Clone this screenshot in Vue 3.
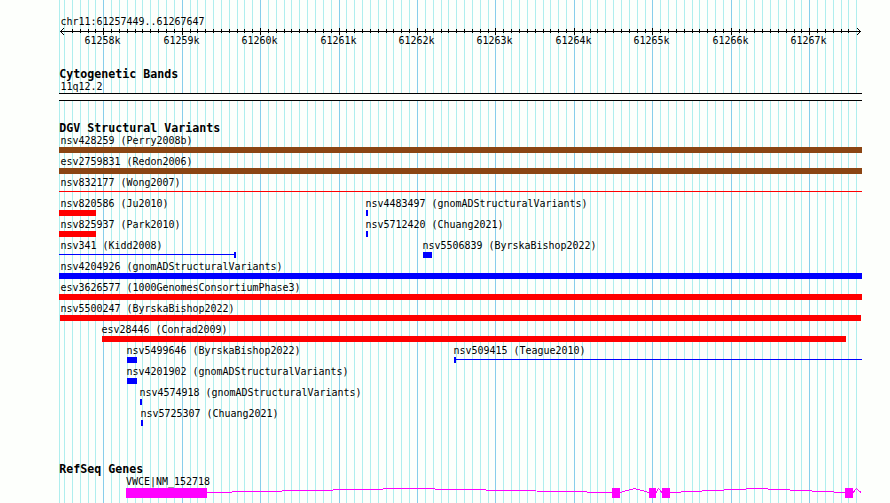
<script setup>
const START = 61257449
const END = 61267647
const LEFT = 60
const px = (bp) => Math.round(LEFT + ((bp - START) * 800) / (END - START))

const ticks = []
for (let bp = Math.ceil(START / 100) * 100; bp <= END; bp += 100) {
  ticks.push({ x: px(bp), major: bp % 1000 === 0, label: `${bp / 1000}k` })
}
const majors = ticks.filter((t) => t.major)
// The outermost grid lines sit under the arrowheads and get no tick
const axisTicks = ticks.slice(1, -1)

const titles = [
  { text: 'Cytogenetic Bands', y: 78 },
  { text: 'DGV Structural Variants', y: 132 },
  { text: 'RefSeq Genes', y: 473 },
]

const labels = [
  { text: 'chr11:61257449..61267647', x: 60, y: 25 },
  { text: '11q12.2', x: 60, y: 90 },
  { text: 'VWCE|NM_152718', x: 125.5, y: 485 },
]

// Features: label position, then bar extent
const variants = [
  { text: 'nsv428259 (Perry2008b)', x: 60, y: 144, from: 59, to: 862, color: '#8b4513' },
  { text: 'esv2759831 (Redon2006)', x: 60, y: 165, from: 59, to: 862, color: '#8b4513' },
  { text: 'nsv832177 (Wong2007)', x: 60, y: 186, from: 59, to: 862, color: '#ff0000', thin: true },
  { text: 'nsv820586 (Ju2010)', x: 60, y: 207, from: 59, to: 96, color: '#ff0000' },
  { text: 'nsv4483497 (gnomADStructuralVariants)', x: 365, y: 207, from: 366, to: 368, color: '#0000ff' },
  { text: 'nsv825937 (Park2010)', x: 60, y: 228, from: 59, to: 96, color: '#ff0000' },
  { text: 'nsv5712420 (Chuang2021)', x: 365, y: 228, from: 366, to: 368, color: '#0000ff' },
  { text: 'nsv341 (Kidd2008)', x: 60, y: 249, from: 59, to: 235, color: '#0000ff', thin: true, cap: 234 },
  { text: 'nsv5506839 (ByrskaBishop2022)', x: 422, y: 249, from: 423, to: 432, color: '#0000ff' },
  { text: 'nsv4204926 (gnomADStructuralVariants)', x: 60, y: 270, from: 59, to: 862, color: '#0000ff' },
  { text: 'esv3626577 (1000GenomesConsortiumPhase3)', x: 60, y: 291, from: 59, to: 862, color: '#ff0000' },
  { text: 'nsv5500247 (ByrskaBishop2022)', x: 60, y: 312, from: 60, to: 861, color: '#ff0000' },
  { text: 'esv28446 (Conrad2009)', x: 101, y: 333, from: 102, to: 846, color: '#ff0000' },
  { text: 'nsv5499646 (ByrskaBishop2022)', x: 126, y: 354, from: 127, to: 137, color: '#0000ff' },
  { text: 'nsv509415 (Teague2010)', x: 453, y: 354, from: 454, to: 862, color: '#0000ff', thin: true, cap: 454 },
  { text: 'nsv4201902 (gnomADStructuralVariants)', x: 126, y: 375, from: 127, to: 137, color: '#0000ff' },
  { text: 'nsv4574918 (gnomADStructuralVariants)', x: 139, y: 396, from: 140, to: 142, color: '#0000ff' },
  { text: 'nsv5725307 (Chuang2021)', x: 140, y: 417, from: 141, to: 143, color: '#0000ff' },
]

const exons = [
  { x: 126, w: 81 },
  { x: 612, w: 8 },
  { x: 649, w: 7 },
  { x: 662, w: 8 },
  { x: 845, w: 8 },
]
const introns =
  'M207 492.5L409.5 488.5L612 492.5M620 492.5L634.5 488.5L649 492.5M656 492.5L658.5 488.5L662 492.5M670 492.5L757 488.5L845 492.5M853 492.5L856.5 488.5L861 492.5'
</script>

<template>
  <svg class="browser" width="890" height="503" viewBox="0 0 890 503">
    <g class="grid">
      <rect x="59" y="0" width="1" height="503" />
      <rect
        v-for="t in ticks"
        :key="t.x"
        :class="{ major: t.major }"
        :x="t.x"
        y="0"
        width="1"
        height="503"
      />
    </g>

    <g class="axis">
      <rect x="60" y="31" width="801" height="1" />
      <rect v-for="t in axisTicks" :key="t.x" :x="t.x" :y="t.major ? 28 : 29" width="1" :height="t.major ? 7 : 4" />
      <path d="M64 28L60.5 31.5L64 35M857 28L860.5 31.5L857 35" />
    </g>
    <text
      v-for="t in majors"
      :key="t.label"
      class="label"
      :x="t.x - 18.5"
      y="44"
      textLength="36"
      lengthAdjust="spacingAndGlyphs"
    >{{ t.label }}</text>

    <text
      v-for="t in titles"
      :key="t.text"
      class="title"
      x="59.3"
      :y="t.y"
      :textLength="t.text.length * 7"
      lengthAdjust="spacingAndGlyphs"
    >{{ t.text }}</text>
    <text
      v-for="l in labels"
      :key="l.text"
      class="label"
      :x="l.x + 0.4"
      :y="l.y"
      :textLength="l.text.length * 6"
      lengthAdjust="spacingAndGlyphs"
    >{{ l.text }}</text>

    <rect class="band-fill" x="59" y="94" width="803" height="6" />
    <rect x="59" y="93" width="803" height="1" />
    <rect x="59" y="100" width="803" height="1" />

    <g v-for="v in variants" :key="v.text">
      <text
        class="label"
        :x="v.x + 0.4"
        :y="v.y"
        :textLength="v.text.length * 6"
        lengthAdjust="spacingAndGlyphs"
      >{{ v.text }}</text>
      <rect
        :x="v.from"
        :y="v.thin ? v.y + 5 : v.y + 3"
        :width="v.to - v.from"
        :height="v.thin ? 1 : 6"
        :fill="v.color"
      />
      <rect v-if="v.cap" :x="v.cap" :y="v.y + 3" width="2" height="6" :fill="v.color" />
    </g>

    <path class="intron" :d="introns" />
    <rect v-for="e in exons" :key="e.x" class="exon" :x="e.x" y="488" :width="e.w" height="10" />
  </svg>
</template>

<style>
body {
  background: #fdfffc;
}
</style>

<style scoped>
.browser {
  display: block;
  shape-rendering: crispEdges;
}
.grid rect {
  fill: #afeeee;
}
.grid .major {
  fill: #87ceeb;
}
.axis path {
  fill: none;
  stroke: #000;
  stroke-width: 1;
}
.label {
  font: 11px 'DejaVu Sans Mono', monospace;
}
.title {
  font: bold 11.6px 'DejaVu Sans Mono', monospace;
}
.band-fill {
  fill: #fdfffc;
}
.exon {
  fill: #f0f;
}
.intron {
  fill: none;
  stroke: #f0f;
  stroke-width: 1;
}
</style>
